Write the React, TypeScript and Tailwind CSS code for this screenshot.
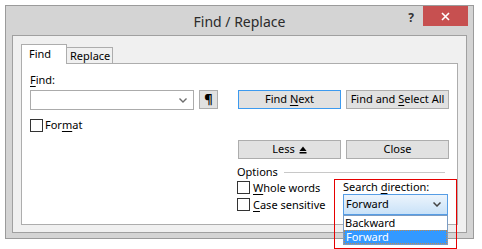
import React from "react";

function Check({ children }: { children: React.ReactNode }) {
  return (
    <div className="flex items-center h-[17px]">
      <span className="w-[13px] h-[13px] border border-[#333] bg-white shrink-0" />
      <span className="ml-[3px] leading-none">{children}</span>
    </div>
  );
}

function Btn({ children, primary }: { children: React.ReactNode; primary?: boolean }) {
  return (
    <div
      className={
        "w-[103px] h-[19px] flex items-center justify-center bg-[#e1e1e1] border " +
        (primary ? "border-[#3c9aef]" : "border-[#adadad]")
      }
    >
      <span className="flex items-center whitespace-pre">{children}</span>
    </div>
  );
}

function U({ children }: { children: React.ReactNode }) {
  return <span className="underline underline-offset-2">{children}</span>;
}

export default function App() {
  return (
    <div className="relative w-[482px] h-[249px] bg-white overflow-hidden font-['Noto_Sans',sans-serif] text-[11px] text-black">
      {/* window */}
      <div className="ml-[5px] mt-[5px] w-[469px] h-[234px] border border-[#9b9b9b] bg-[#d4d4d4] flex flex-col">
        <div className="relative h-[29px] flex items-center justify-center">
          <span className="text-[14px] text-[#2b2b2b] mt-[1px]">Find / Replace</span>
          <div className="absolute right-[5px] top-0 flex items-start">
            <span className="mt-[3px] mr-[9px] text-[12px] font-bold text-[#333]">?</span>
            <div className="w-[45px] h-[20px] bg-[#c75050] flex items-center justify-center">
              <svg width="9" height="9" viewBox="0 0 9 9">
                <path d="M1 1 L8 8 M8 1 L1 8" stroke="white" strokeWidth="1.6" />
              </svg>
            </div>
          </div>
        </div>

        {/* inner panel */}
        <div className="mx-[6px] h-[198px] border border-[#a0a0a0] bg-[#f0f0f0] pl-[8px] pt-[8px]">
          <div className="flex items-end h-[19px]">
            <div className="relative z-10 -mb-px w-[46px] h-[20px] bg-white border-t border-l border-r border-[#adadad] pl-[7px] pt-[1px]">
              Find
            </div>
            <div className="w-[46px] h-[16px] bg-[#f0f0f0] border-t border-r border-[#adadad] pl-[3px] leading-[15px]">
              Replace
            </div>
          </div>

          {/* tab panel */}
          <div className="w-[437px] h-[162px] border border-[#adadad] bg-white flex pl-[8px]">
            <div className="w-[188px] pt-[8px]">
              <div className="h-[16px] leading-[16px]">
                <U>F</U>ind:
              </div>
              <div className="mt-[2px] flex">
                <div className="w-[165px] h-[20px] border border-[#ababab] bg-white flex items-center justify-end pr-[6px]">
                  <svg width="8" height="5" viewBox="0 0 8 5">
                    <path d="M0.5 0.5 L4 4 L7.5 0.5" stroke="#6d6d6d" strokeWidth="1.4" fill="none" />
                  </svg>
                </div>
                <div className="ml-[5px] w-[19px] h-[19px] bg-[#e1e1e1] border border-[#adadad] flex items-center justify-center text-[13px] font-bold leading-none">
                  ¶
                </div>
              </div>
              <div className="mt-[7px] flex items-center">
                <span className="w-[13px] h-[13px] border border-[#333] bg-white" />
                <span className="ml-[2px]">
                  For<U>m</U>at
                </span>
              </div>
            </div>

            <div className="ml-[20px] w-[211px] pt-[26px]">
              <div className="flex gap-[5px]">
                <Btn primary>
                  Find <U>N</U>ext
                </Btn>
                <Btn>
                  Find and <U>S</U>elect All
                </Btn>
              </div>
              <div className="flex gap-[5px] mt-[31px]">
                <Btn>
                  Less
                  <svg className="ml-[4px]" width="8" height="8" viewBox="0 0 8 8">
                    <path d="M4 0.5 L7.5 5 L0.5 5 Z" fill="black" />
                    <rect x="0.5" y="6" width="7" height="1.5" fill="black" />
                  </svg>
                </Btn>
                <Btn>Close</Btn>
              </div>
              <div className="mt-[6px] h-[14px] flex items-center -ml-px">
                <span>Options</span>
                <div className="flex-1 ml-[6px] mr-[4px] h-px bg-[#c8c8c8]" />
              </div>
              <div className="flex">
                <div className="w-[106px] -ml-px">
                  <Check>
                    <U>W</U>hole words
                  </Check>
                  <Check>
                    <U>C</U>ase sensitive
                  </Check>
                </div>
                <div className="relative">
                  <div className="h-[15px] leading-[15px]">
                    Search <U>d</U>irection:
                  </div>
                  <div className="w-[105px] h-[21px] border border-[#569de5] bg-gradient-to-b from-[#ecf4fc] to-[#c9e2f8] flex items-center justify-between pl-[2px] pr-[6px]">
                    <span>Forward</span>
                    <svg width="8" height="5" viewBox="0 0 8 5">
                      <path d="M0.5 0.5 L4 4 L7.5 0.5" stroke="#444" strokeWidth="1.5" fill="none" />
                    </svg>
                  </div>
                  <div className="absolute left-0 top-[36px] w-[105px] h-[30px] border border-[#7a9cc4] bg-white z-20 flex flex-col">
                    <div className="h-[14px] leading-[14px] pl-[1px]">Backward</div>
                    <div className="h-[14px] leading-[12px] pl-[1px] bg-[#3399ff] text-white border border-dotted border-[#c58a4a]">
                      Forward
                    </div>
                  </div>
                </div>
              </div>
            </div>
          </div>
        </div>
      </div>

      {/* red highlight */}
      <div className="absolute left-[334px] top-[179px] w-[123px] h-[70px] border border-[#e60000] z-30 pointer-events-none" />
    </div>
  );
}
